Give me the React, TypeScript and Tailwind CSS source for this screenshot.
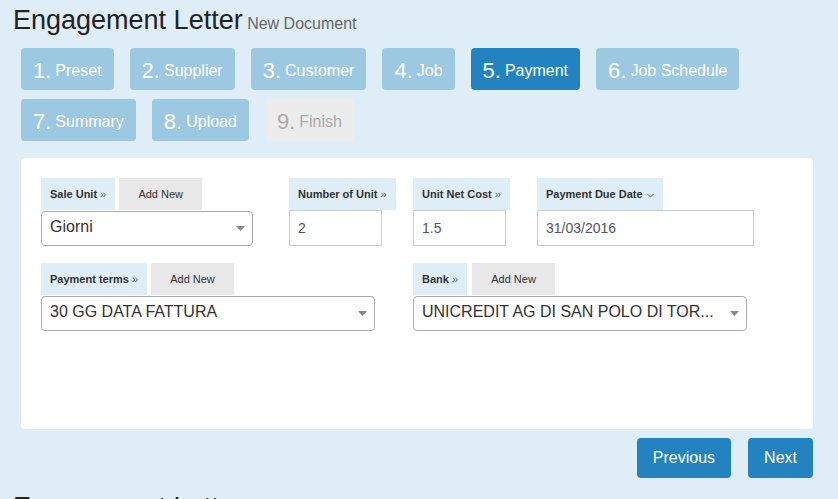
import React from "react";

const steps = [
  { n: "1.", label: "Preset" },
  { n: "2.", label: "Supplier" },
  { n: "3.", label: "Customer" },
  { n: "4.", label: "Job" },
  { n: "5.", label: "Payment", active: true },
  { n: "6.", label: "Job Schedule" },
  { n: "7.", label: "Summary" },
  { n: "8.", label: "Upload" },
  { n: "9.", label: "Finish", disabled: true },
];

function Tab({ children }: { children: React.ReactNode }) {
  return (
    <div className="flex h-[32px] items-center whitespace-nowrap bg-[#dfedf7] px-[9px] text-[11px] font-bold text-[#333]">
      {children}
    </div>
  );
}

function Raquo() {
  return <span className="ml-[3px] font-normal text-[#55657a]">»</span>;
}

function AddNew() {
  return (
    <div className="flex h-[32px] w-[83px] items-center justify-center bg-[#e8e8e8] text-[11px] text-[#333]">
      Add New
    </div>
  );
}

function Select({ value, width }: { value: string; width: string }) {
  return (
    <div
      className={`mt-px flex h-[35px] items-center justify-between rounded-[4px] border border-[#aaa] bg-white pb-[4px] pl-[8px] pr-[7px] text-[16px] text-[#333] ${width}`}
    >
      <span className="whitespace-nowrap">{value}</span>
      <svg width="9" height="5" viewBox="0 0 9 5" className="mt-[4px] shrink-0">
        <path d="M0 0h9L4.5 5z" fill="#888" />
      </svg>
    </div>
  );
}

function Input({ value, width }: { value: string; width: string }) {
  return (
    <div className={`flex h-[36px] items-center border border-[#ccc] bg-white px-[8px] text-[14px] text-[#555] ${width}`}>
      {value}
    </div>
  );
}

function Title() {
  return (
    <div className="whitespace-nowrap px-[13px] pt-[5px] leading-[31px]">
      <span className="text-[27px] text-[#222]">Engagement Letter</span>{" "}
      <span className="text-[16px] text-[#666]">New Document</span>
    </div>
  );
}

export default function App() {
  return (
    <div className="h-[499px] overflow-hidden bg-[#dfedf7] font-['Liberation_Sans',Arial,sans-serif]">
      <Title />

      <div className="mt-[9px] flex w-[813px] flex-wrap gap-x-4 gap-y-[9px] pl-[21px]">
        {steps.map((s) => (
          <div
            key={s.n}
            className={`flex h-[42px] items-center whitespace-nowrap rounded-[4px] px-3 pt-[3px] leading-none ${
              s.active
                ? "bg-[#2283c0] text-white"
                : s.disabled
                ? "bg-[#ececec] text-[#aaa]"
                : "bg-[#9dc8e2] text-white"
            }`}
          >
            <span className="text-[22px]">{s.n}</span>
            <span className="ml-[4px] text-[16px]">{s.label}</span>
          </div>
        ))}
      </div>

      <div className="ml-[21px] mt-[17px] h-[271px] w-[792px] rounded-[4px] bg-white px-[20px] pt-[20px]">
        {/* row 1 */}
        <div className="flex items-start">
          <div className="w-[248px]">
            <div className="flex gap-[4px]">
              <Tab>
                Sale Unit<Raquo />
              </Tab>
              <AddNew />
            </div>
            <Select value="Giorni" width="w-[212px]" />
          </div>
          <div className="w-[124px]">
            <div className="flex">
              <Tab>
                Number of Unit<Raquo />
              </Tab>
            </div>
            <Input value="2" width="w-[93px]" />
          </div>
          <div className="w-[124px]">
            <div className="flex">
              <Tab>
                Unit Net Cost<Raquo />
              </Tab>
            </div>
            <Input value="1.5" width="w-[93px]" />
          </div>
          <div>
            <div className="flex">
              <Tab>
                Payment Due Date
                <svg width="7" height="5" viewBox="0 0 7 5" className="ml-[4px] mt-[2px]">
                  <path d="M0.5 1l3 3 3-3" fill="none" stroke="#666" strokeWidth="1" />
                </svg>
              </Tab>
            </div>
            <Input value="31/03/2016" width="w-[217px]" />
          </div>
        </div>

        {/* row 2 */}
        <div className="mt-[17px] flex items-start">
          <div className="w-[372px]">
            <div className="flex gap-[4px]">
              <Tab>
                Payment terms<Raquo />
              </Tab>
              <AddNew />
            </div>
            <Select value="30 GG DATA FATTURA" width="w-[334px]" />
          </div>
          <div>
            <div className="flex gap-[5px]">
              <Tab>
                Bank<Raquo />
              </Tab>
              <AddNew />
            </div>
            <Select value="UNICREDIT AG DI SAN POLO DI TOR..." width="w-[334px]" />
          </div>
        </div>
      </div>

      <div className="mt-[9px] flex w-[813px] justify-end gap-[17px]">
        <button className="h-[40px] rounded-[4px] bg-[#2283c0] px-4 text-[16px] text-white">Previous</button>
        <button className="h-[40px] rounded-[4px] bg-[#2283c0] px-4 text-[16px] text-white">Next</button>
      </div>

      <div className="mt-[9px]">
        <Title />
      </div>
    </div>
  );
}
